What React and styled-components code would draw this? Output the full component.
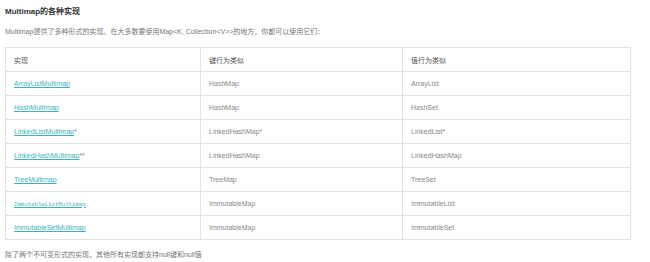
import React from 'react'
import styled, { createGlobalStyle } from 'styled-components'

const rows = [
    { impl: 'ArrayListMultimap', key: 'HashMap', value: 'ArrayList' },
    { impl: 'HashMultimap', key: 'HashMap', value: 'HashSet' },
    { impl: 'LinkedListMultimap', mark: '*', key: 'LinkedHashMap*', value: 'LinkedList*' },
    { impl: 'LinkedHashMultimap', mark: '**', key: 'LinkedHashMap', value: 'LinkedHashMap' },
    { impl: 'TreeMultimap', key: 'TreeMap', value: 'TreeSet' },
    { impl: 'ImmutableListMultimap', mono: true, key: 'ImmutableMap', value: 'ImmutableList' },
    { impl: 'ImmutableSetMultimap', key: 'ImmutableMap', value: 'ImmutableSet' },
]

const App = () => {
    return (
        <>
        <GlobalStyle />
        <Page>
            <Title>Multimap的各种实现</Title>
            <Intro>Multimap提供了多种形式的实现。在大多数要使用Map&lt;K, Collection&lt;V&gt;&gt;的地方，你都可以使用它们：</Intro>
            <Table>
                <thead>
                    <tr>
                        <Head>实现</Head>
                        <Head>键行为类似</Head>
                        <Head>值行为类似</Head>
                    </tr>
                </thead>
                <tbody>
                    {rows.map(row => (
                        <tr key={row.impl}>
                            <Cell>
                                <Link href="#" mono={row.mono ? 1 : 0}>{row.impl}</Link>
                                {row.mark}
                            </Cell>
                            <Cell>{row.key}</Cell>
                            <Cell>{row.value}</Cell>
                        </tr>
                    ))}
                </tbody>
            </Table>
            <Footer>除了两个不可变形式的实现，其他所有实现都支持null键和null值</Footer>
        </Page>
        </>
    )
}

export default App

const GlobalStyle = createGlobalStyle`
    body {
        margin: 0;
        background: #fff;
    }
`

const Page = styled.div`
    width: 650px;
    height: 262px;
    padding: 6px 19px 0 5px;
    box-sizing: border-box;
    font-family: "Liberation Sans", "Noto Sans CJK SC", sans-serif;
    color: #777;
    font-size: 7px;
`

const Title = styled.h3`
    margin: 0;
    font-size: 8px;
    line-height: 11px;
    font-weight: bold;
    color: #333;
`

const Intro = styled.p`
    margin: 10px 0 0;
    line-height: 10px;
`

const Table = styled.table`
    margin-top: 10px;
    width: 626px;
    border-collapse: collapse;
    table-layout: fixed;
    border: 1px solid #e2e2e2;
`

const Head = styled.th`
    height: 24px;
    padding: 0 8px;
    text-align: left;
    font-weight: normal;
    color: #555;
    border: 1px solid #e2e2e2;
    box-sizing: border-box;
    &:nth-child(1) { width: 195px; }
    &:nth-child(2) { width: 202px; }
`

const Cell = styled.td`
    height: 23px;
    padding: 0 8px;
    border: 1px solid #e2e2e2;
    color: #888;
`

const Link = styled.a`
    color: #3fb0bb;
    text-decoration: underline;
    font-family: ${p => p.mono ? '"Liberation Mono", monospace' : 'inherit'};
    font-size: ${p => p.mono ? '5.7px' : 'inherit'};
`

const Footer = styled.p`
    margin: 10px 0 0;
    line-height: 10px;
`
